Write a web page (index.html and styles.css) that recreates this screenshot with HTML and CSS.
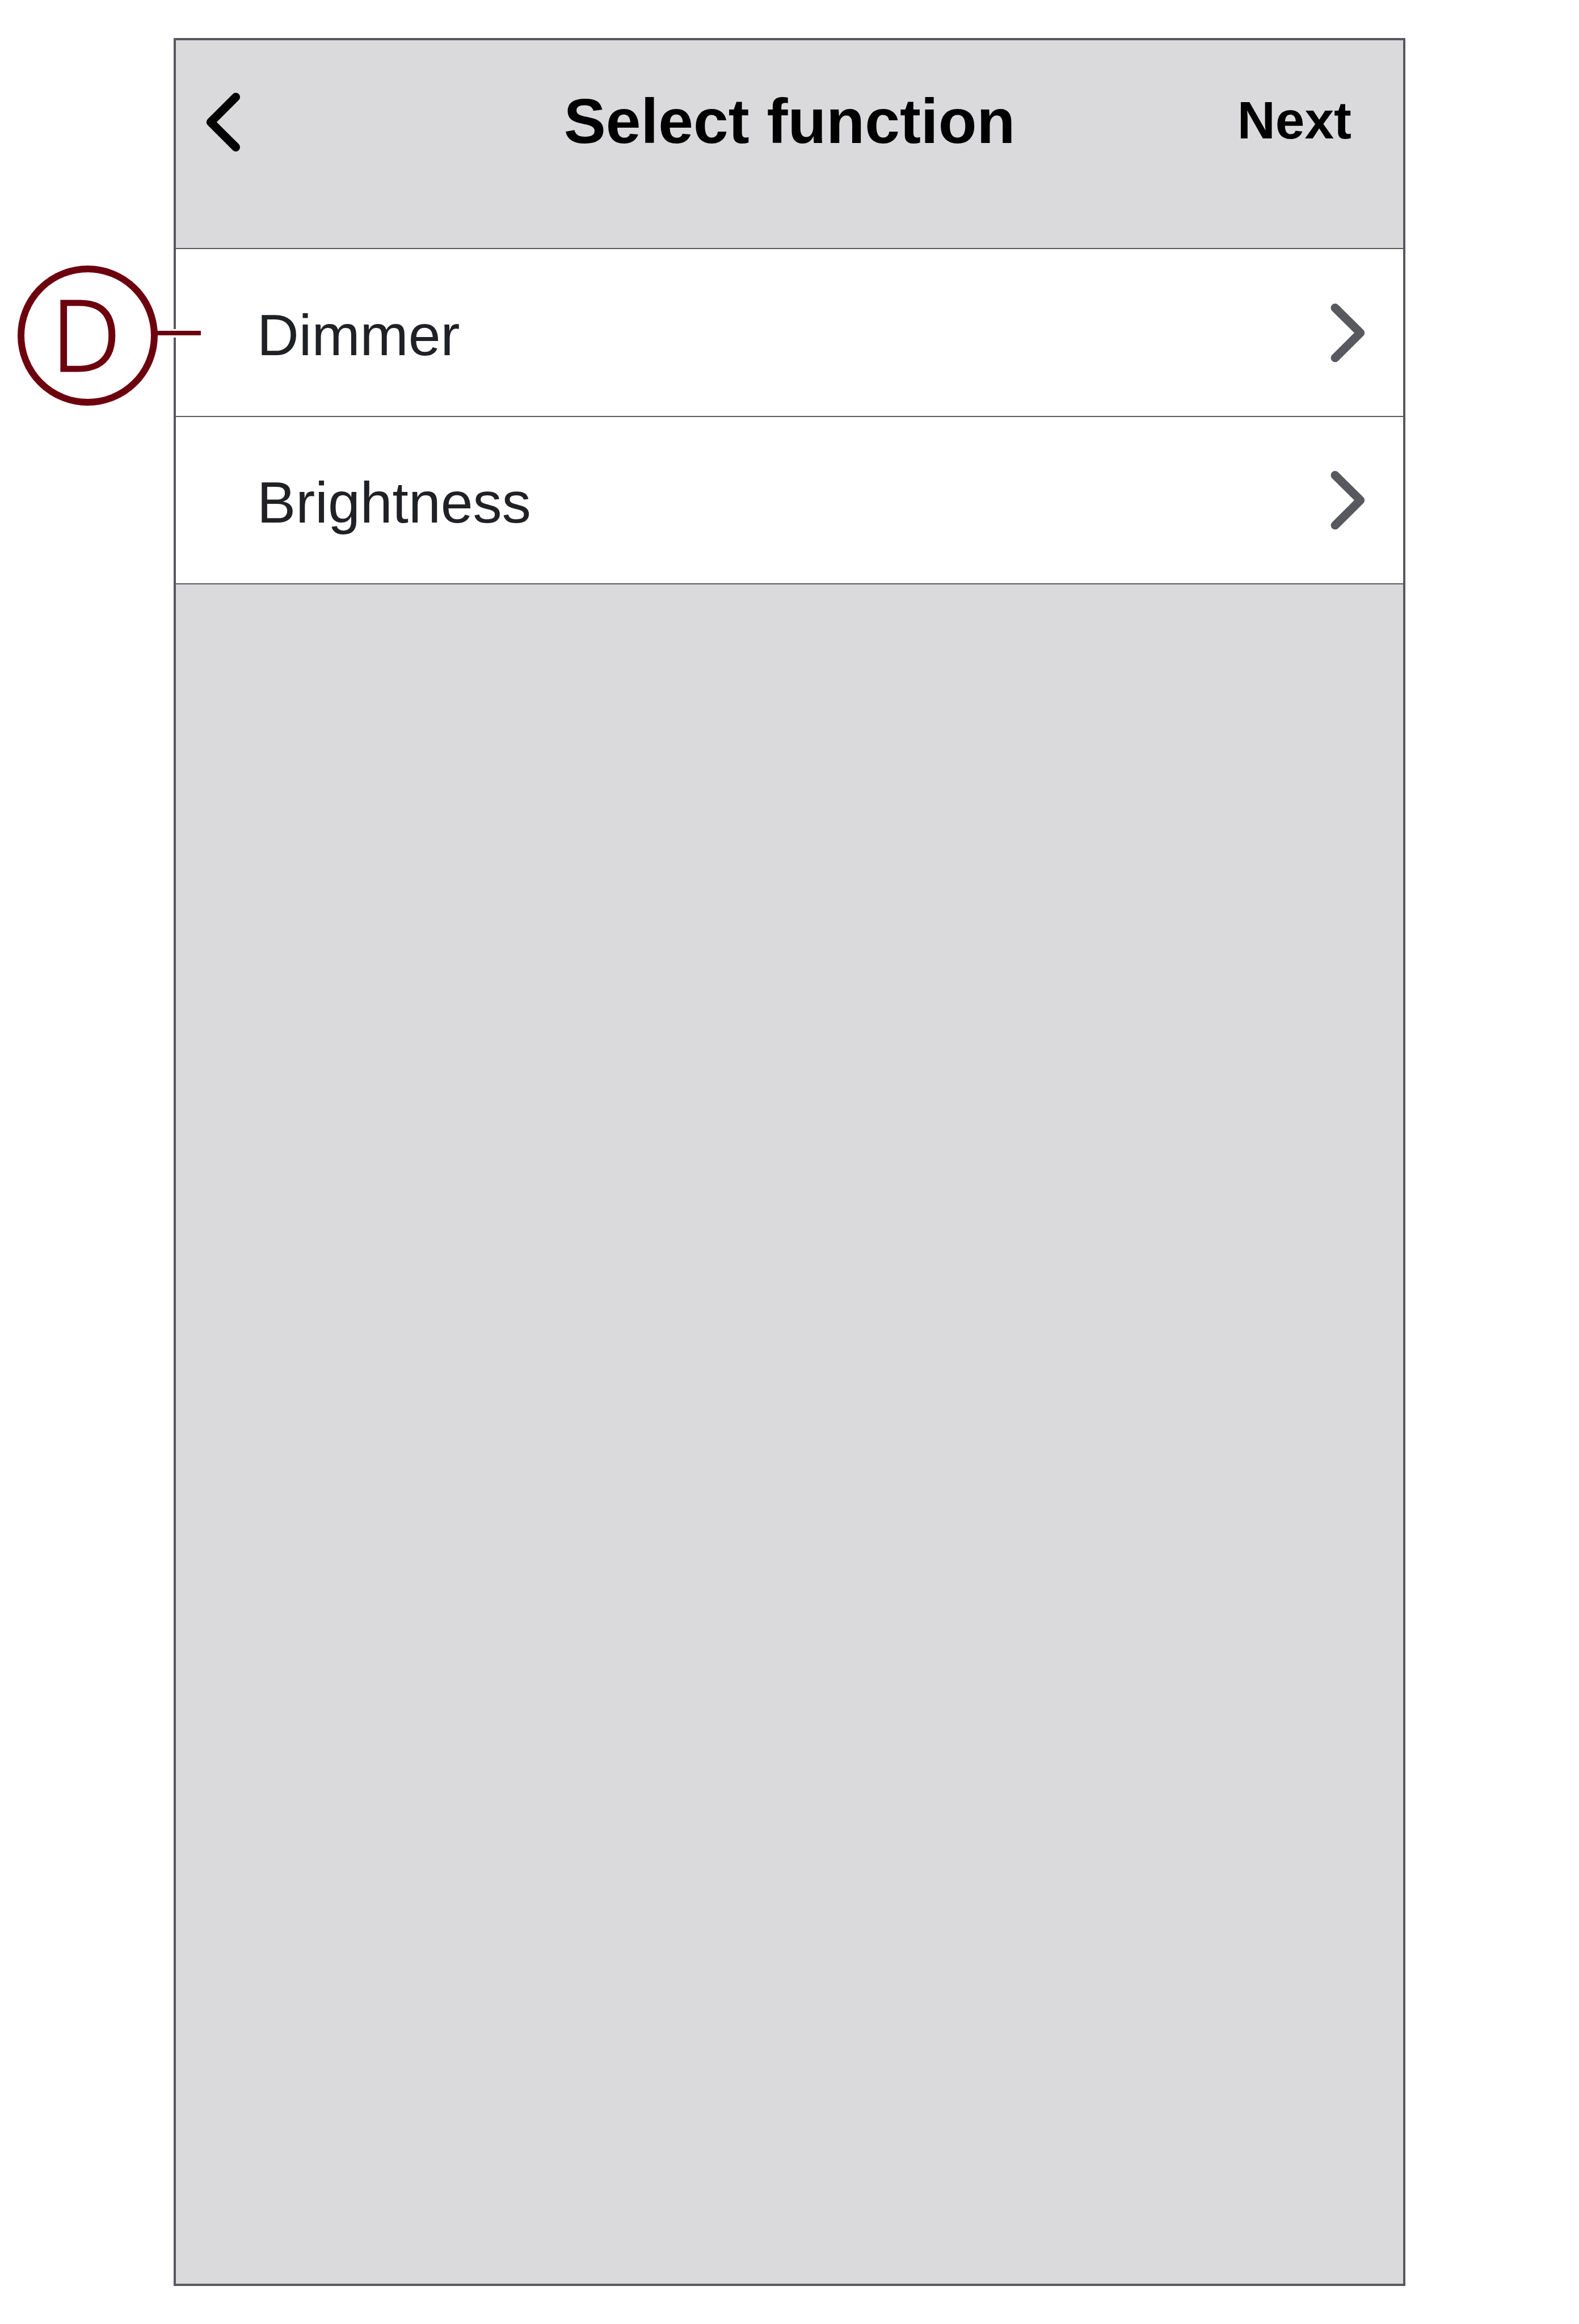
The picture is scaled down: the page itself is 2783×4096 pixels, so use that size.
FILE: index.html
```
<!DOCTYPE html>
<html lang="en">
<head>
    <meta charset="UTF-8">
    <title>Select function</title>
    <link rel="stylesheet" href="styles.css">
</head>
<body>
    <div class="screen">
        <header class="header">
            <svg class="chevron" viewBox="0 0 70 107" xmlns="http://www.w3.org/2000/svg">
                <path d="M55.6 11 L11.3 55.2 L55.6 99.4"/>
            </svg>
            <h1 class="title">Select function</h1>
            <div class="next">Next</div>
        </header>

        <div class="row">
            <span class="label">Dimmer</span>
            <svg class="chevron" viewBox="0 0 70 107" xmlns="http://www.w3.org/2000/svg">
                <path d="M11.1 9.6 L55.6 53.7 L11.1 97.8"/>
            </svg>
        </div>
        <div class="row row-last">
            <span class="label">Brightness</span>
            <svg class="chevron" viewBox="0 0 70 107" xmlns="http://www.w3.org/2000/svg">
                <path d="M11.1 9.6 L55.6 53.7 L11.1 97.8"/>
            </svg>
        </div>
    </div>

    <!-- Callout marker -->
    <div class="gap"></div>
    <div class="pointer"></div>
    <div class="callout">D</div>
</body>
</html>
```
FILE: styles.css
```
* {
    box-sizing: border-box;
}

body {
    position: relative;
    display: flow-root;
    width: 2783px;
    height: 4096px;
    margin: 0;
    background: #fff;
    font-family: "Liberation Sans", Arial, sans-serif;
}

.screen {
    width: 2171px;
    height: 3962px;
    margin: 67px 0 0 306px;
    border: 4px solid #58595f;
    background: #dadadc;
}

.header {
    display: grid;
    grid-template-columns: 1fr auto 1fr;
    align-items: center;
    height: 368px;
    padding: 0 91px 81px 50px;
    border-bottom: 2px solid #58595f;
    color: #000;
}

.title {
    margin: 0 0 0 41px;
    font-size: 111px;
    line-height: 128px;
    font-weight: bold;
}

.next {
    justify-self: end;
    padding-bottom: 3px;
    font-size: 92.8px;
    line-height: 106px;
    font-weight: bold;
}

.chevron {
    width: 70px;
    height: 107px;
    fill: none;
    stroke: currentColor;
    stroke-width: 15;
    stroke-linecap: round;
    stroke-linejoin: round;
}

.row {
    display: flex;
    align-items: center;
    justify-content: space-between;
    height: 296px;
    padding: 0 61px 0 143px;
    border-bottom: 2px solid #58595f;
    background: #fff;
    color: #58595f;
}

.row-last {
    height: 295px;
}

.label {
    padding-top: 9px;
    font-size: 102.2px;
    line-height: 118px;
    color: #202125;
}

/* Marker sits over the edge of the screen */
.callout {
    position: absolute;
    left: 31px;
    top: 468px;
    width: 247px;
    height: 247px;
    padding-right: 6px;
    border: 12px solid #6d020f;
    border-radius: 50%;
    color: #6d020f;
    font-family: "Open Sans", sans-serif;
    font-size: 173px;
    font-weight: 300;
    line-height: 215px;
    text-align: center;
    -webkit-text-stroke: 3px #6d020f;
}

.pointer {
    position: absolute;
    left: 274px;
    top: 583px;
    width: 80px;
    height: 8px;
    background: #6d020f;
}

.gap {
    position: absolute;
    left: 306px;
    top: 580px;
    width: 4px;
    height: 15px;
    background: #fff;
}
```
